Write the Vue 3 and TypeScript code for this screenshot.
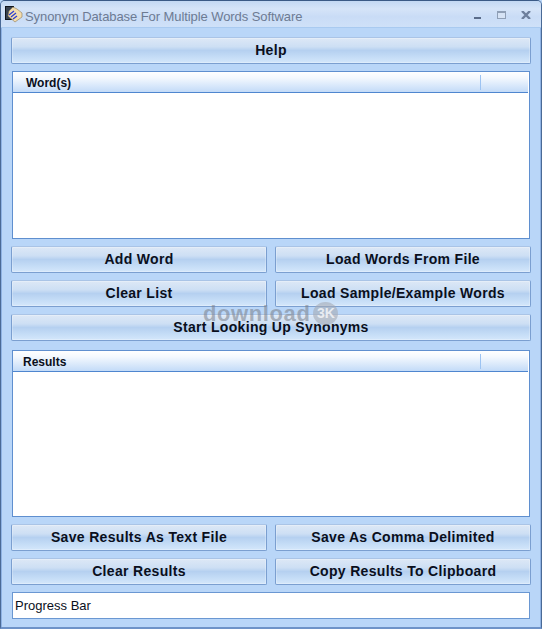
<template>
  <div class="window">
    <div class="titlebar">
      <svg class="app-icon" width="18" height="18" viewBox="0 0 18 18">
        <rect x="0.5" y="1.5" width="8" height="13" fill="#39424f" stroke="#10151c" />
        <path d="M4 6 L8 2 L12 4 L17 8 L17 12 L10 17 L3 11 Z" fill="#f3dcae" stroke="#8d7a55" stroke-width="0.6" />
        <path d="M4 10 L9 6 M6 12 L11 8 M8 14 L12 11" stroke="#2f3fd0" stroke-width="1.3" />
      </svg>
      <span class="title">{{ title }}</span>
      <div class="caption">
        <span class="min"></span>
        <span class="max"></span>
        <svg class="close" width="10" height="8" viewBox="0 0 10 8">
          <path d="M1 0 L9 8 M9 0 L1 8" stroke="#6e7f9c" stroke-width="2.4" />
        </svg>
      </div>
    </div>
    <div class="client">
      <button class="btn">Help</button>
      <div class="list words">
        <div class="list-head"><span class="col col-words">Word(s)</span><span class="rest"></span></div>
      </div>
      <div class="row">
        <button class="btn">Add Word</button>
        <button class="btn">Load Words From File</button>
      </div>
      <div class="row">
        <button class="btn">Clear List</button>
        <button class="btn">Load Sample/Example Words</button>
      </div>
      <button class="btn">Start Looking Up Synonyms</button>
      <div class="list results">
        <div class="list-head"><span class="col col-results">Results</span><span class="rest"></span></div>
      </div>
      <div class="row">
        <button class="btn">Save Results As Text File</button>
        <button class="btn">Save As Comma Delimited</button>
      </div>
      <div class="row">
        <button class="btn">Clear Results</button>
        <button class="btn">Copy Results To Clipboard</button>
      </div>
      <div class="progress">Progress Bar</div>
    </div>
    <div class="watermark">
      <span class="mark-text">download</span>
      <span class="badge">3K</span>
    </div>
  </div>
</template>

<script setup lang="ts">
const title: string = 'Synonym Database For Multiple Words Software'
</script>

<style>
html, body {
  margin: 0;
  background: #b9d6f8;
}
</style>

<style scoped>
.window {
  position: relative;
  box-sizing: border-box;
  width: 542px;
  height: 629px;
  background: #b9d6f8;
  border: 1px solid #4a6a96;
  border-top-color: #3b5a86;
  border-bottom: 2px solid #6e93c8;
  border-radius: 5px 5px 0 0;
  font-family: "Liberation Sans", Arial, sans-serif;
  overflow: hidden;
}
.titlebar {
  display: flex;
  align-items: center;
  box-sizing: border-box;
  height: 27px;
  padding: 5px 10px 0 4px;
  background: linear-gradient(#c3d8f3, #d5e4f8 30%, #c9dcf6 60%, #cfe1f8);
  border-bottom: 1px solid #a9caf0;
}
.app-icon {
  flex: none;
  margin-top: -5px;
}
.title {
  margin-left: 2px;
  font-size: 13px;
  color: #6d7b93;
  letter-spacing: -0.08px;
}
.caption {
  display: flex;
  align-items: center;
  margin-left: auto;
  margin-top: -3px;
}
.min {
  width: 7px;
  height: 2px;
  margin-right: 16px;
  background: #5a6c8a;
  transform: translateY(3px);
}
.max {
  box-sizing: border-box;
  width: 9px;
  height: 8px;
  margin-right: 15px;
  border: 1px solid #8f9fb6;
  border-top-width: 2px;
  background: #d6e3f5;
}
.client {
  display: flex;
  flex-direction: column;
  box-sizing: border-box;
  height: 600px;
  padding: 9px 9px 0;
  border-left: 1px solid #8fb3e4;
  border-right: 1px solid #8fb3e4;
}
.btn {
  display: block;
  box-sizing: border-box;
  width: 100%;
  height: 27px;
  margin: 0 0 7px;
  padding: 0 0 2px;
  font-family: inherit;
  font-size: 14px;
  font-weight: 700;
  letter-spacing: 0.32px;
  color: #0a0f1c;
  border: 1px solid #7b9fd0;
  border-top-color: #aac4e6;
  border-radius: 2px;
  background: linear-gradient(#dde8f6, #cddff4 35%, #b5d0f0 50%, #c4dcf6 75%, #d4e7fb);
  box-shadow: inset 0 0 0 1px rgba(255, 255, 255, 0.25);
}
.row {
  display: flex;
  gap: 8px;
}
.row .btn {
  flex: 1 1 0;
  min-width: 0;
}
.list {
  box-sizing: border-box;
  margin: 0 1px 7px;
  background: #fff;
  border: 1px solid #5f8fcf;
}
.words {
  height: 168px;
}
.results {
  height: 167px;
  margin-top: 2px;
}
.list-head {
  display: flex;
  box-sizing: border-box;
  height: 21px;
  margin-right: 1px;
  border-bottom: 1px solid #4f86cf;
  background: linear-gradient(#fff, #f3f8fe 30%, #c3dbf8);
  font-size: 12px;
  font-weight: 700;
  color: #0a0f1c;
}
.col {
  flex: none;
  box-sizing: border-box;
  width: 468px;
  height: 15px;
  margin-top: 3px;
  line-height: 16px;
  border-right: 1px solid #9cc3f2;
}
.col-words {
  padding-left: 13px;
}
.col-results {
  padding-left: 10px;
}
.progress {
  box-sizing: border-box;
  height: 27px;
  margin: 0 1px;
  padding-left: 2px;
  line-height: 25px;
  font-size: 13px;
  color: #0a0f1c;
  background: #fff;
  border: 1px solid #6a97d2;
}
.watermark {
  position: absolute;
  left: 202px;
  top: 301px;
  display: flex;
  align-items: flex-start;
  gap: 3px;
  font-weight: 700;
  pointer-events: none;
}
.mark-text {
  margin-top: 4px;
  font-size: 22px;
  line-height: 16px;
  letter-spacing: 0.6px;
  color: rgba(120, 125, 135, 0.55);
}
.badge {
  width: 25px;
  height: 23px;
  line-height: 23px;
  text-align: center;
  font-size: 14px;
  color: rgba(240, 242, 246, 0.9);
  border-radius: 50%;
  background: rgba(165, 170, 180, 0.6);
}
</style>
